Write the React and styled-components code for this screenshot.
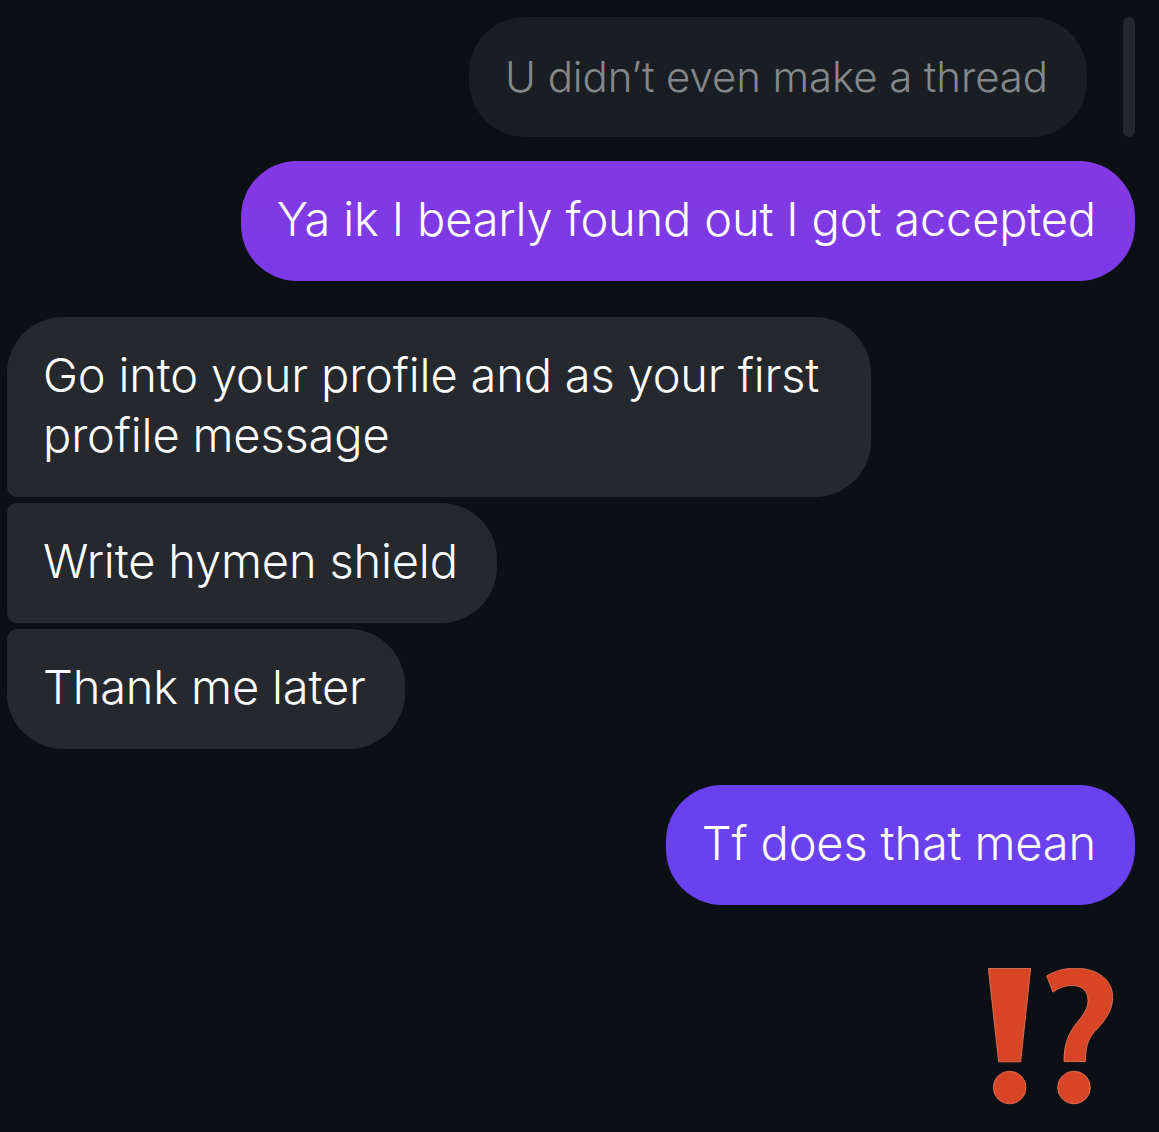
import React from "react";
import styled, { createGlobalStyle } from "styled-components";

const Global = createGlobalStyle`
  html, body { margin: 0; padding: 0; background: #0c0f14; }
  body { font-family: Inter, "Noto Sans", "Liberation Sans", sans-serif; }
`;

const Page = styled.div`
  width: 1159px;
  height: 1132px;
  box-sizing: border-box;
  padding: 17px 24px 0 7px;
  display: flex;
  flex-direction: column;
  overflow: hidden;
  background: #0c0f14;
`;

const QuoteRow = styled.div`
  display: flex;
  justify-content: flex-end;
  gap: 36px;
  margin-bottom: 24px;
`;

const QuoteBar = styled.div`
  width: 12px;
  border-radius: 6px;
  background: #24272c;
`;

const Bubble = styled.div`
  box-sizing: border-box;
  width: fit-content;
  padding: 28px 39px 32px 36px;
  font-size: 47px;
  line-height: 60px;
  letter-spacing: -0.17px;
  font-weight: 350;
  color: #ffffff;
`;

const QuoteBubble = styled(Bubble)`
  padding: 30px 39px 30px 36px;
  font-size: 42px;
  letter-spacing: -0.1px;
  border-radius: 56px;
  background: #1a1d21;
  color: #85888b;
`;

const SentBubble = styled(Bubble)`
  align-self: flex-end;
  border-radius: 56px;
  white-space: nowrap;
  background: ${(p) => p.$bg};
  margin-bottom: ${(p) => p.$after}px;
`;

const ReceivedGroup = styled.div`
  display: flex;
  flex-direction: column;
  gap: 6px;
  margin-bottom: 36px;
`;

const ReceivedBubble = styled(Bubble)`
  max-width: 864px;
  background: #25282d;
  border-radius: 10px 56px 56px 10px;
  ${(p) => p.$first && "border-top-left-radius: 56px;"}
  ${(p) => p.$last && "border-bottom-left-radius: 56px;"}
`;

const ReactionRow = styled.div`
  display: flex;
  justify-content: flex-end;
  padding-right: 22px;
  margin-top: 63px;
`;

const Reaction = () => (
  <svg width="125" height="137" viewBox="85 85 375 410" aria-hidden="true">
    <g fill="#d84526" stroke="#e8795c" strokeWidth="2.5" strokeLinejoin="round">
      <path d="M86 86H213L183 366H117Z" />
      <circle cx="150" cy="443" r="49" />
      <path d="M261 108C288 92 318 85 346 85C414 85 459 120 459 172C459 213 437 241 408 272C389 292 378 312 377 365H313C313 312 326 280 354 246C374 222 385 205 385 182C385 154 368 137 336 137C316 137 297 144 280 157Z" />
      <circle cx="343" cy="443" r="49" />
    </g>
  </svg>
);

export default function App() {
  return (
    <Page>
      <Global />
      <QuoteRow>
        <QuoteBubble>U didn’t even make a thread</QuoteBubble>
        <QuoteBar />
      </QuoteRow>
      <SentBubble $bg="linear-gradient(180deg, #8439e4 0%, #7a3ae6 100%)" $after={36}>
        Ya ik I bearly found out I got accepted
      </SentBubble>
      <ReceivedGroup>
        <ReceivedBubble $first>Go into your profile and as your first profile message</ReceivedBubble>
        <ReceivedBubble>Write hymen shield</ReceivedBubble>
        <ReceivedBubble $last>Thank me later</ReceivedBubble>
      </ReceivedGroup>
      <SentBubble $bg="#6a41ef" $after={0}>Tf does that mean</SentBubble>
      <ReactionRow>
        <Reaction />
      </ReactionRow>
    </Page>
  );
}
